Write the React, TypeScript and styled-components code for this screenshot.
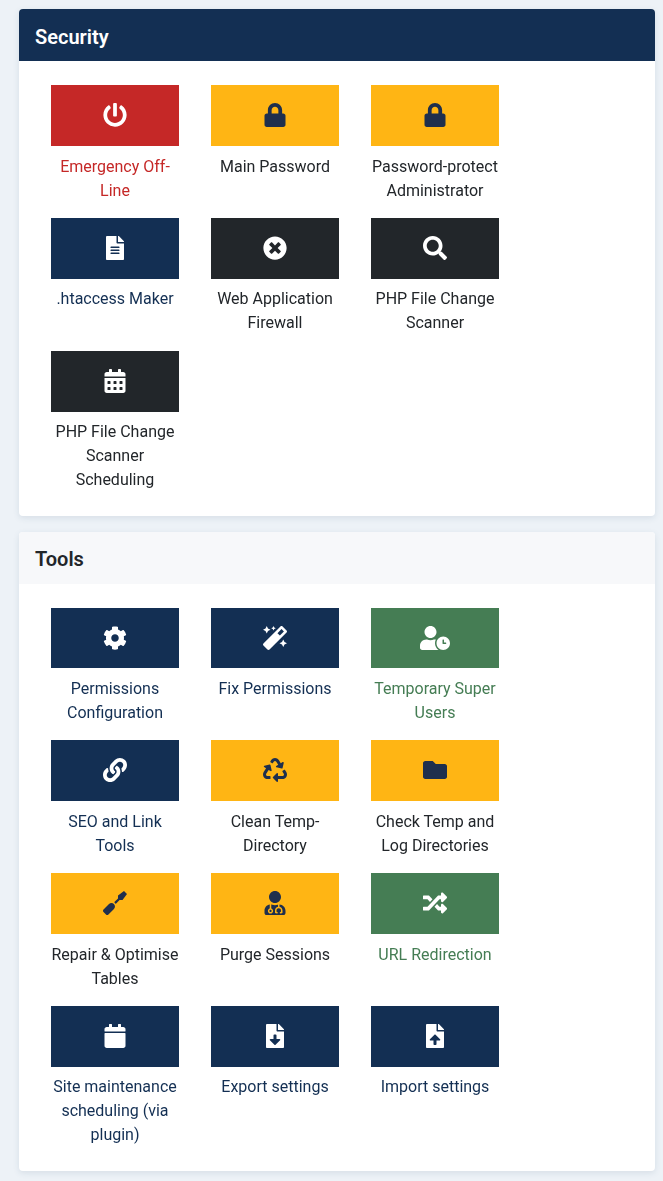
import styled, { createGlobalStyle } from "styled-components";
import type { IconType } from "react-icons";
import {
  FaPowerOff,
  FaLock,
  FaFileAlt,
  FaTimesCircle,
  FaSearch,
  FaCalendarAlt,
  FaCog,
  FaMagic,
  FaUserClock,
  FaLink,
  FaRecycle,
  FaFolder,
  FaScrewdriver,
  FaUserMd,
  FaRandom,
  FaCalendar,
  FaFileDownload,
  FaFileUpload,
} from "react-icons/fa";

type Tone = "danger" | "warning" | "primary" | "dark" | "success";

const tones: Record<Tone, { bg: string; icon: string; label: string }> = {
  danger: { bg: "#c52827", icon: "#ffffff", label: "#c52827" },
  warning: { bg: "#ffb514", icon: "#1f2f4d", label: "#22262a" },
  primary: { bg: "#132f53", icon: "#ffffff", label: "#132f53" },
  dark: { bg: "#22262a", icon: "#ffffff", label: "#22262a" },
  success: { bg: "#457d54", icon: "#ffffff", label: "#457d54" },
};

const GlobalStyle = createGlobalStyle`
  html, body {
    margin: 0;
    background: #edf2f7;
    font-family: Roboto, "Liberation Sans", sans-serif;
  }
  * {
    box-sizing: border-box;
  }
`;

const Page = styled.main`
  display: flex;
  flex-direction: column;
  gap: 16px;
  height: 1181px;
  overflow: hidden;
  padding: 9.2px 8px 0 19px;
  will-change: opacity;
`;

const Card = styled.section`
  background: #ffffff;
  border-radius: 4px;
  box-shadow: 0 2px 6px rgba(52, 79, 113, 0.12);
  overflow: hidden;
`;

const CardHeader = styled.h2<{ $active?: boolean }>`
  margin: 0;
  height: 52px;
  padding: 3.64px 16px 0;
  display: flex;
  align-items: center;
  font-size: 20px;
  font-weight: 600;
  color: ${(p) => (p.$active ? "#ffffff" : "#22262a")};
  background: ${(p) => (p.$active ? "#132f53" : "#f7f8fa")};
`;

const Grid = styled.div`
  display: flex;
  flex-wrap: wrap;
  align-items: flex-start;
  column-gap: 32px;
  padding: 24px 32px 8px;
`;

const Tile = styled.a<{ $lines: number }>`
  display: flex;
  flex-direction: column;
  width: 128px;
  height: ${(p) => (p.$lines === 3 ? "140.8px" : "116.8px")};
  margin-bottom: 16px;
  text-align: center;
  font-size: 16px;
  line-height: 24px;
  color: inherit;
  text-decoration: none;
`;

const IconBox = styled.div<{ $tone: Tone; $wide?: boolean }>`
  flex: none;
  height: 60.8px;
  padding-bottom: 0.8px;
  display: flex;
  align-items: center;
  justify-content: center;
  background: ${(p) => tones[p.$tone].bg};
  color: ${(p) => tones[p.$tone].icon};

  svg {
    width: ${(p) => (p.$wide ? "30px" : "24px")};
    height: 24px;
  }
`;

const Label = styled.span<{ $tone: Tone }>`
  margin-top: 8.6px;
  color: ${(p) => tones[p.$tone].label};
`;

type Item = { label: string; tone: Tone; icon: IconType; lines?: number; wide?: boolean };

const security: Item[] = [
  { label: "Emergency Off-Line", tone: "danger", icon: FaPowerOff },
  { label: "Main Password", tone: "warning", icon: FaLock },
  { label: "Password-protect Administrator", tone: "warning", icon: FaLock },
  { label: ".htaccess Maker", tone: "primary", icon: FaFileAlt },
  { label: "Web Application Firewall", tone: "dark", icon: FaTimesCircle },
  { label: "PHP File Change Scanner", tone: "dark", icon: FaSearch },
  { label: "PHP File Change Scanner Scheduling", tone: "dark", icon: FaCalendarAlt, lines: 3 },
];

const tools: Item[] = [
  { label: "Permissions Configuration", tone: "primary", icon: FaCog },
  { label: "Fix Permissions", tone: "primary", icon: FaMagic },
  { label: "Temporary Super Users", tone: "success", icon: FaUserClock, wide: true },
  { label: "SEO and Link Tools", tone: "primary", icon: FaLink },
  { label: "Clean Temp-Directory", tone: "warning", icon: FaRecycle },
  { label: "Check Temp and Log Directories", tone: "warning", icon: FaFolder },
  { label: "Repair & Optimise Tables", tone: "warning", icon: FaScrewdriver },
  { label: "Purge Sessions", tone: "warning", icon: FaUserMd },
  { label: "URL Redirection", tone: "success", icon: FaRandom },
  { label: "Site maintenance scheduling (via plugin)", tone: "primary", icon: FaCalendar, lines: 3 },
  { label: "Export settings", tone: "primary", icon: FaFileDownload },
  { label: "Import settings", tone: "primary", icon: FaFileUpload },
];

const TileGrid = ({ items }: { items: Item[] }) => (
  <Grid>
    {items.map((item) => (
      <Tile key={item.label} $lines={item.lines ?? 2}>
        <IconBox $tone={item.tone} $wide={item.wide}>
          <item.icon />
        </IconBox>
        <Label $tone={item.tone}>{item.label}</Label>
      </Tile>
    ))}
  </Grid>
);

const App = () => (
  <>
    <GlobalStyle />
    <Page>
      <Card>
        <CardHeader $active>Security</CardHeader>
        <TileGrid items={security} />
      </Card>
      <Card>
        <CardHeader>Tools</CardHeader>
        <TileGrid items={tools} />
      </Card>
    </Page>
  </>
);

export default App;
